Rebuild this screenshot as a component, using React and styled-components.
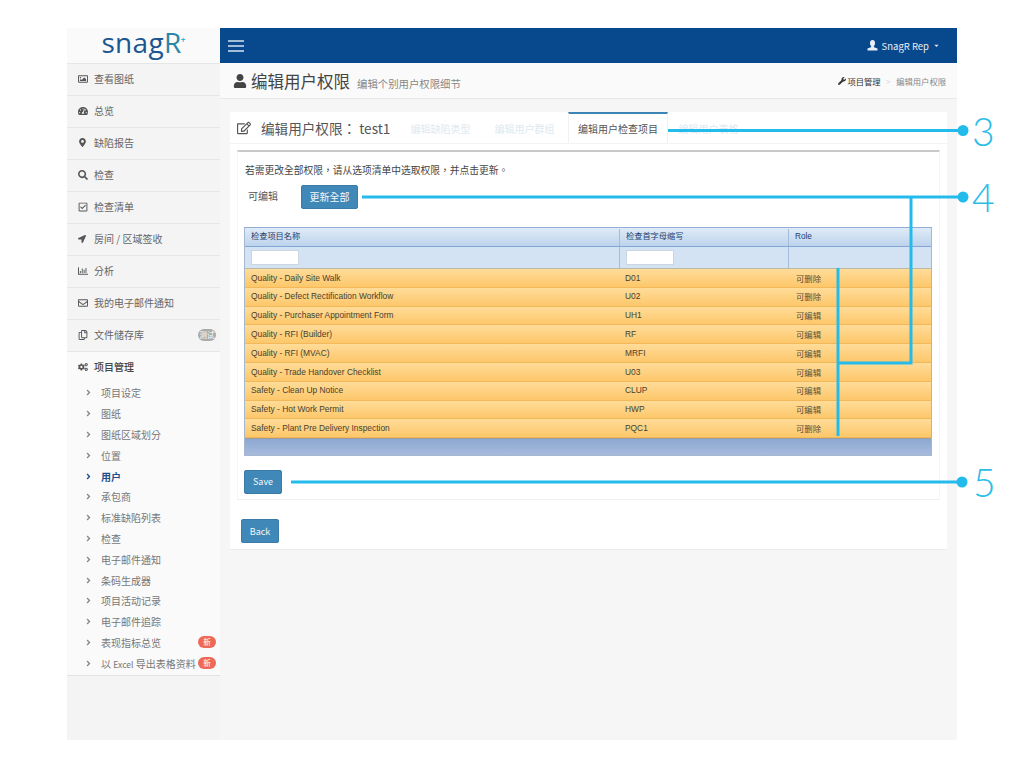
import React from 'react';
import styled, { createGlobalStyle } from 'styled-components';
import {
  FaRegImage, FaTachometerAlt, FaMapMarkerAlt, FaSearch, FaRegCheckSquare, FaLocationArrow,
  FaRegChartBar, FaRegEnvelope, FaRegCopy, FaCogs, FaAngleRight, FaUser, FaWrench, FaRegEdit, FaCaretDown,
} from 'react-icons/fa';

const CJK = '"Noto Sans CJK TC", "Noto Sans CJK SC", "Open Sans", sans-serif';

const Global = createGlobalStyle`
  html, body { margin: 0; padding: 0; background: #fff; }
  body { font-family: ${CJK}; }
  * { box-sizing: border-box; }
`;

const Page = styled.div`
  position: relative;
  width: 1024px;
  height: 768px;
  padding: 28px 67px;
  overflow: hidden;
`;
const Frame = styled.div`
  display: flex;
  width: 890px;
  height: 712px;
`;
const Sidebar = styled.aside`
  width: 153px;
  flex: none;
  background: #f4f4f4;
  display: flex;
  flex-direction: column;
`;
const Logo = styled.div`
  height: 36px;
  background: #fafafa;
  border-bottom: 1px solid #e6e6e6;
  display: flex;
  align-items: center;
  justify-content: center;
  font: 500 28px/1 "Open Sans", sans-serif;
  color: #1c5690;
  letter-spacing: .3px;
  padding: 0 4px 7px 0;
`;
const LogoR = styled.span`
  color: #2a86a6;
  position: relative;
`;
const LogoPlus = styled.span`
  position: absolute;
  right: -4px;
  top: 8px;
  font-size: 8px;
  font-weight: 700;
  line-height: 1;
  color: #2fb4d4;
`;
const MenuRow = styled.div`
  height: 32px;
  flex: none;
  display: flex;
  align-items: center;
  padding: 0 4px 2px 11px;
  border-bottom: 1px solid #e7e7e7;
  color: ${p => (p.$open ? '#444' : '#666')};
  background: ${p => (p.$open ? '#fafafa' : '#f4f4f4')};
  font-size: 10px;
  font-weight: ${p => (p.$open ? 500 : 400)};
  ${p => p.$open && 'border-bottom: 0; height: 31px;'}
`;
const MenuIcon = styled.span`
  width: 16px;
  flex: none;
  display: inline-flex;
  align-items: center;
  font-size: ${p => p.$size || 10}px;
  color: #555;
`;
const Label = styled.span`
  flex: 1;
  white-space: nowrap;
`;
const Latin = styled.span`
  font-size: 8.6px;
`;
const Badge = styled.span`
  flex: none;
  width: 18px;
  height: 12px;
  border-radius: 6px;
  font-size: 7.5px;
  line-height: 12px;
  text-align: center;
  color: #fff;
  background: ${p => (p.$new ? '#ee6a58' : '#aaa')};
`;
const SubList = styled.div`
  background: #fafafa;
  border-bottom: 1px solid #e2e2e2;
  padding-bottom: 1px;
`;
const SubRow = styled.div`
  height: 20.8px;
  display: flex;
  align-items: center;
  padding: 0 4px 1px 17px;
  font-size: 10px;
  color: ${p => (p.$active ? '#1d4f8c' : '#777')};
  font-weight: ${p => (p.$active ? 700 : 400)};
`;
const Chevron = styled.span`
  width: 17px;
  flex: none;
  display: inline-flex;
  font-size: 9px;
  color: ${p => (p.$active ? '#1d4f8c' : '#888')};
`;
const Main = styled.main`
  flex: 1;
  background: #f6f6f6;
  display: flex;
  flex-direction: column;
`;
const TopBar = styled.header`
  height: 35px;
  flex: none;
  background: #08488c;
  color: #e8eef5;
  display: flex;
  align-items: center;
  justify-content: space-between;
  padding: 0 17px 0 8px;
  font-size: 9.5px;
`;
const UserMenu = styled.span`
  display: flex;
  align-items: center;
  gap: 4px;
`;
const TitleBar = styled.div`
  height: 36px;
  flex: none;
  background: #fafafa;
  border-bottom: 1px solid #e8e8e8;
  display: flex;
  align-items: center;
  justify-content: space-between;
  padding: 0 11px 0 13px;
`;
const Heading = styled.div`
  display: flex;
  align-items: baseline;
  gap: 7px;
  color: #444;
  font-size: 16.5px;
`;
const HeadingIcon = styled.span`
  display: inline-flex;
  font-size: 14px;
  margin-right: -3px;
  align-self: center;
`;
const HeadingSub = styled.span`
  font-size: 10.4px;
  color: #888;
`;
const Crumbs = styled.div`
  display: flex;
  align-items: center;
  gap: 5px;
  font-size: 8.3px;
  color: #888;
`;
const CrumbLink = styled.span`
  display: inline-flex;
  align-items: center;
  gap: 1px;
  color: #333;
`;
const CrumbSep = styled.span`
  color: #ddd;
  margin: 0 .5px;
`;
const Content = styled.div`
  margin: 13px 10px 0;
  height: 438px;
  background: #fff;
  border-bottom: 1px solid #ececec;
  display: flex;
  flex-direction: column;
`;
const TabStrip = styled.div`
  height: 32px;
  flex: none;
  display: flex;
  align-items: stretch;
  border-bottom: 1px solid #f3f3f3;
  padding-left: 7px;
`;
const PanelTitle = styled.div`
  width: 163px;
  flex: none;
  display: flex;
  align-items: center;
  gap: 10px;
  color: #555;
  font-size: 13.6px;
`;
const TitleIcon = styled.span`
  display: inline-flex;
  font-size: 14px;
  color: #555;
`;
const Tab = styled.div`
  display: flex;
  align-items: center;
  justify-content: center;
  font-size: 10px;
  width: ${p => (p.$active ? '100px' : '84px')};
  padding-right: ${p => (p.$active ? '0' : '3px')};
  margin-top: ${p => (p.$active ? '0' : '1px')};
  color: ${p => (p.$active ? '#555' : '#dde9f1')};
  ${p => p.$active && `
    border-top: 2px solid #3d85b5;
    border-left: 1px solid #f1f1f1;
    border-right: 1px solid #f1f1f1;
    background: #fff;
  `}
`;
const TabBody = styled.div`
  margin: 6px 7px 0 7px;
  height: 350px;
  border-top: 2px solid #c9c9c9;
  border-bottom: 1px solid #f0f0f0;
  border-right: 1px solid #f5f5f5;
  border-left: 1px solid #f5f5f5;
  padding: 11px 7px 0 6px;
`;
const Hint = styled.div`
  font-size: 9.75px;
  line-height: 14px;
  padding-left: 1px;
  color: #444;
`;
const BulkRow = styled.div`
  display: flex;
  align-items: center;
  height: 24px;
  margin-top: 8px;
  padding-left: 4px;
  font-size: 10px;
  color: #555;
`;
const BulkLabel = styled.span`
  width: 53px;
  padding-bottom: 3px;
`;
const Button = styled.button`
  width: ${p => p.$w}px;
  height: 24px;
  border: 1px solid #3a7ba8;
  border-radius: 2px;
  background: #3f88b8;
  color: #f4f8fb;
  font: 400 ${p => p.$fs || 10}px/1 ${CJK};
  padding: 0;
`;
const Grid = styled.div`
  margin-top: 18px;
  width: 688px;
  border: 1px solid #a5b8d0;
  border-top-color: #8eaed4;
  font: 400 8.4px/1 "Liberation Sans", "Noto Sans CJK TC", sans-serif;
`;
const Row = styled.div`
  display: grid;
  grid-template-columns: 374px 169px 1fr;
  height: ${p => p.$h}px;
`;
const HeadRow = styled(Row)`
  background: linear-gradient(#dfebf7, #bdd3ec);
  border-bottom: 1px solid #82a6d6;
  color: #25406d;
  font-size: 8.2px;
  padding-top: 1px;
`;
const FilterRow = styled(Row)`
  background: #d3e3f3;
  border-bottom: 1px solid #b9b9a8;
`;
const DataRow = styled(Row)`
  background: linear-gradient(#ffdc99, #fdc76a);
  border-bottom: 1px solid #f2b85a;
  color: #47412f;
`;
const Cell = styled.div`
  display: flex;
  align-items: center;
  padding-left: 6px;
  border-left: ${p => (p.$line ? '1px solid #a5bcd8' : '0')};
  white-space: nowrap;
`;
const RoleCell = styled(Cell)`
  padding-left: 8px;
  padding-top: 2px;
  color: #5a4f35;
`;
const FilterInput = styled.input`
  width: 48px;
  height: 15px;
  border: 1px solid #ccd6e0;
  background: #fff;
  padding: 0;
`;
const GridFoot = styled.div`
  height: 16.5px;
  background: linear-gradient(#8da8d2, #a6bbdc);
  border-top: 1px solid #9b9b9b;
`;
const SaveRow = styled.div`
  display: flex;
  margin-top: 14px;
`;
const BackRow = styled.div`
  display: flex;
  margin: 19px 0 0 11px;
`;
const Overlay = styled.svg`
  position: absolute;
  left: 0;
  top: 0;
  width: 1024px;
  height: 768px;
  pointer-events: none;
`;
const CalloutNum = styled.text`
  font: 300 39px "Lato", sans-serif;
  fill: #29bdea;
`;

const Burger = () => (
  <svg width="16" height="12" viewBox="0 0 16 12" aria-hidden="true">
    <path d="M0 1h16M0 6h16M0 11h16" stroke="#d5e3f0" strokeWidth="1.4" />
  </svg>
);
const UserGlyph = () => (
  <svg width="11" height="11" viewBox="0 0 11 11" aria-hidden="true">
    <ellipse cx="5.5" cy="3.2" rx="2.5" ry="3.1" fill="#e8eef5" />
    <path d="M4.3 6h2.4l.4 1.2 3.4 1.4V10.6H.5V8.6l3.4-1.4z" fill="#e8eef5" />
  </svg>
);

const menu = [
  [FaRegImage, '查看图纸'], [FaTachometerAlt, '总览'], [FaMapMarkerAlt, '缺陷报告', null, 9], [FaSearch, '检查'],
  [FaRegCheckSquare, '检查清单'], [FaLocationArrow, '房间 / 区域签收', null, 8], [FaRegChartBar, '分析'],
  [FaRegEnvelope, '我的电子邮件通知'], [FaRegCopy, '文件储存库', '测试'],
];
const subs = ['项目设定', '图纸', '图纸区域划分', '位置', '用户', '承包商', '标准缺陷列表', '检查', '电子邮件通知', '条码生成器', '项目活动记录', '电子邮件追踪', '表现指标总览',
  <>以 <Latin>Excel</Latin> 导出表格资料</>];
const rows = [
  ['Quality - Daily Site Walk', 'D01', '可删除'],
  ['Quality - Defect Rectification Workflow', 'U02', '可删除'],
  ['Quality - Purchaser Appointment Form', 'UH1', '可编辑'],
  ['Quality - RFI (Builder)', 'RF', '可编辑'],
  ['Quality - RFI (MVAC)', 'MRFI', '可编辑'],
  ['Quality - Trade Handover Checklist', 'U03', '可编辑'],
  ['Safety - Clean Up Notice', 'CLUP', '可编辑'],
  ['Safety - Hot Work Permit', 'HWP', '可编辑'],
  ['Safety - Plant Pre Delivery Inspection', 'PQC1', '可删除'],
];

const LINE = { stroke: '#22bbec', strokeWidth: 3, fill: 'none' };

export default function App() {
  return (
    <Page lang="zh-Hant">
      <Global />
      <Frame>
        <Sidebar>
          <Logo>snag<LogoR>R<LogoPlus>+</LogoPlus></LogoR></Logo>
          {menu.map(([Icon, text, badge, size]) => (
            <MenuRow key={text}>
              <MenuIcon $size={size}><Icon /></MenuIcon>
              <Label>{text}</Label>
              {badge && <Badge>{badge}</Badge>}
            </MenuRow>
          ))}
          <MenuRow $open>
            <MenuIcon><FaCogs /></MenuIcon>
            <Label>项目管理</Label>
          </MenuRow>
          <SubList>
            {subs.map((s, i) => (
              <SubRow key={i} $active={s === '用户'}>
                <Chevron $active={s === '用户'}><FaAngleRight /></Chevron>
                <Label>{s}</Label>
                {i >= 12 && <Badge $new>新</Badge>}
              </SubRow>
            ))}
          </SubList>
        </Sidebar>
        <Main>
          <TopBar>
            <Burger />
            <UserMenu><UserGlyph /> SnagR Rep <FaCaretDown size={7} /></UserMenu>
          </TopBar>
          <TitleBar>
            <Heading>
              <HeadingIcon><FaUser /></HeadingIcon>
              编辑用户权限
              <HeadingSub>编辑个别用户权限细节</HeadingSub>
            </Heading>
            <Crumbs>
              <CrumbLink><FaWrench size={8} />项目管理</CrumbLink>
              <CrumbSep>&gt;</CrumbSep>
              编辑用户权限
            </Crumbs>
          </TitleBar>
          <Content>
            <TabStrip>
              <PanelTitle>
                <TitleIcon><FaRegEdit /></TitleIcon>
                编辑用户权限： test1
              </PanelTitle>
              <Tab>编辑缺陷类型</Tab>
              <Tab>编辑用户群组</Tab>
              <Tab $active>编辑用户检查项目</Tab>
              <Tab>编辑用户表格</Tab>
            </TabStrip>
            <TabBody>
              <Hint>若需更改全部权限，请从选项清单中选取权限，并点击更新。</Hint>
              <BulkRow>
                <BulkLabel>可编辑</BulkLabel>
                <Button $w={57}>更新全部</Button>
              </BulkRow>
              <Grid>
                <HeadRow $h={19}>
                  <Cell>检查项目名称</Cell>
                  <Cell $line>检查首字母缩写</Cell>
                  <Cell $line>Role</Cell>
                </HeadRow>
                <FilterRow $h={22}>
                  <Cell><FilterInput aria-label="检查项目名称" /></Cell>
                  <Cell $line><FilterInput aria-label="检查首字母缩写" /></Cell>
                  <Cell $line />
                </FilterRow>
                {rows.map(([a, b, c]) => (
                  <DataRow key={a} $h={18.8}>
                    <Cell>{a}</Cell>
                    <Cell>{b}</Cell>
                    <RoleCell>{c}</RoleCell>
                  </DataRow>
                ))}
                <GridFoot />
              </Grid>
              <SaveRow>
                <Button $w={38} $fs={9}>Save</Button>
              </SaveRow>
            </TabBody>
            <BackRow>
              <Button $w={38} $fs={9}>Back</Button>
            </BackRow>
          </Content>
        </Main>
      </Frame>
      <Overlay viewBox="0 0 1024 768">
        <path d="M668 130.5H962" {...LINE} />
        <circle cx="963" cy="130.5" r="5.5" fill="#22bbec" />
        <CalloutNum x="972" y="146">3</CalloutNum>
        <path d="M362 197H962M911 197V363H838M838 268V436" {...LINE} />
        <circle cx="963" cy="197" r="5.5" fill="#22bbec" />
        <CalloutNum x="972" y="212">4</CalloutNum>
        <path d="M291 482H962" {...LINE} />
        <circle cx="962" cy="482" r="5.5" fill="#22bbec" />
        <CalloutNum x="973" y="497">5</CalloutNum>
      </Overlay>
    </Page>
  );
}
